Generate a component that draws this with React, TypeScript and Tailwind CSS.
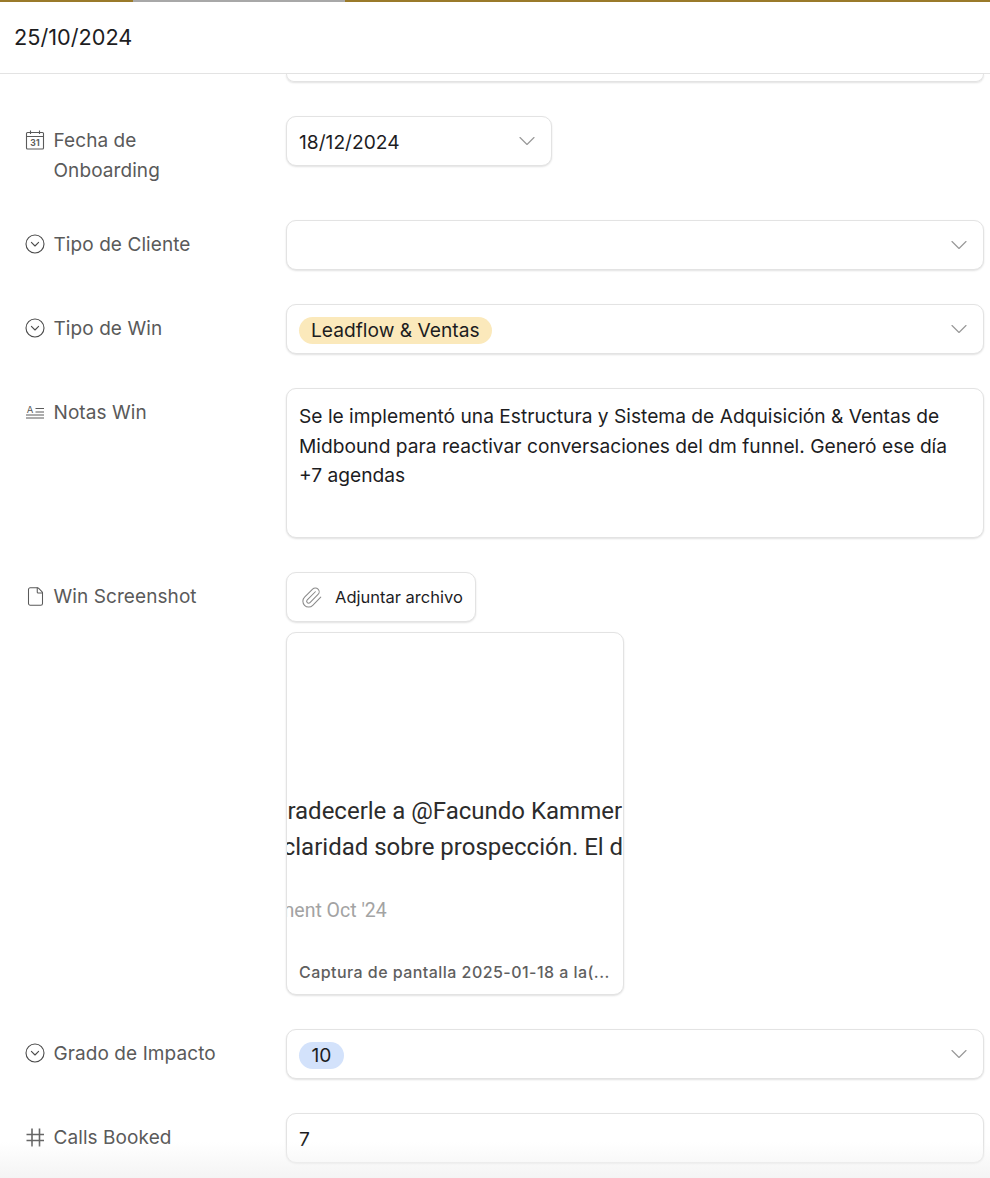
import React from "react";
import { Paperclip, File, ChevronDown } from "lucide-react";

const CircleDown = () => (
  <svg width="20" height="20" viewBox="0 0 20 20" fill="none" stroke="#4b4b4b" strokeWidth="1.1" strokeLinecap="round" strokeLinejoin="round">
    <circle cx="10" cy="10" r="9" />
    <path d="M6.4 8.4 10 12l3.6-3.6" />
  </svg>
);

const CalendarIcon = () => (
  <svg width="20" height="20" viewBox="0 0 20 20" fill="none" stroke="#5a5a5a" strokeWidth="1.1">
    <rect x="1.5" y="2.5" width="17" height="16.5" rx="1" />
    <path d="M1.5 6.5h17M5.5 0.5v3.5M14.5 0.5v3.5" />
    <text x="10" y="16" textAnchor="middle" fontSize="8.5" fontWeight="700" fill="#5a5a5a" stroke="none" fontFamily="Inter, sans-serif">31</text>
  </svg>
);

const NotesIcon = () => (
  <svg width="20" height="20" viewBox="0 0 20 20" fill="none" stroke="#5a5a5a" strokeWidth="1">
    <text x="5" y="10.5" textAnchor="middle" fontSize="9.5" fill="#5a5a5a" stroke="none" fontFamily="Inter, sans-serif">A</text>
    <path d="M10.5 6.5h8.5M10.5 10h8.5M1 13h18M1 16h18" />
  </svg>
);

const HashIcon = () => (
  <svg width="20" height="20" viewBox="0 0 20 20" fill="none" stroke="#666" strokeWidth="1.6">
    <path d="M7 1.5v18M14.5 1.5v18M1.5 7.5h17.5M1.5 13.5h17.5" />
  </svg>
);

const Label = ({ icon, children }: { icon: React.ReactNode; children: React.ReactNode }) => (
  <div className="flex w-[261px] shrink-0 pl-[25px] pt-[10px] pr-[27px] text-[19px] leading-[30px] tracking-[0.08px] text-[#5a5a5a]">
    <span className="mt-[4px] w-[28.5px] shrink-0">{icon}</span>
    <span>{children}</span>
  </div>
);

const box = "rounded-[10px] border border-[#e3e3e3] bg-white shadow-[0_1px_2px_rgba(0,0,0,0.12)]";

const Select = ({ children, w }: { children?: React.ReactNode; w?: string }) => (
  <div className={`${box} flex h-[50px] items-center justify-between pl-[12px] pr-[10px] ${w ?? "w-[698px]"}`}>
    <div className="flex items-center pt-[2px]">{children}</div>
    <ChevronDown size={28} strokeWidth={1} color="#999" />
  </div>
);

export default function App() {
  return (
    <div className="relative h-[1178px] w-[990px] overflow-hidden bg-white text-[#1d1d1f] [font-family:Inter,'Liberation_Sans',sans-serif]">
      <div className="flex h-[2px]">
        <div className="w-[133px] bg-[#9a7a2a]" />
        <div className="w-[212px] bg-[#a8a8a8]" />
        <div className="flex-1 bg-[#9a7a2a]" />
      </div>
      <div className="flex h-[72px] items-center border-b border-[#e3e3e3] pl-[14px] text-[21.7px] text-[#1d1d1f]">25/10/2024</div>

      <div className="pl-[286px]">
        <div className="h-[8px] w-[698px] rounded-b-[10px] border-x border-b border-[#e3e3e3] shadow-[0_1px_2px_rgba(0,0,0,0.12)]" />
      </div>

      <div className="mt-[34px] flex flex-col gap-[34px]">
        <div className="flex h-[70px] items-start">
          <div className="w-[286px] shrink-0"><Label icon={<CalendarIcon />}>Fecha de Onboarding</Label></div>
          <Select w="w-[266px]"><span className="mt-[1px] text-[19.2px]">18/12/2024</span></Select>
        </div>

        <div className="flex">
          <div className="w-[286px] shrink-0"><Label icon={<CircleDown />}>Tipo de Cliente</Label></div>
          <Select />
        </div>

        <div className="flex">
          <div className="w-[286px] shrink-0"><Label icon={<CircleDown />}>Tipo de Win</Label></div>
          <Select>
            <span className="rounded-full bg-[#fbe9bb] px-[12px] text-[19.2px] leading-[27px]">Leadflow &amp; Ventas</span>
          </Select>
        </div>

        <div className="flex">
          <div className="w-[286px] shrink-0"><Label icon={<NotesIcon />}>Notas Win</Label></div>
          <div className={`${box} h-[150px] w-[698px] px-[12px] pt-[13px] text-[19.2px] leading-[29.7px]`}>
            Se le implementó una Estructura y Sistema de Adquisición &amp; Ventas de Midbound para reactivar conversaciones del dm funnel. Generó ese día +7 agendas
          </div>
        </div>

        <div className="flex">
          <div className="w-[286px] shrink-0"><Label icon={<File size={21} strokeWidth={1.2} color="#5a5a5a" />}>Win Screenshot</Label></div>
          <div className="flex flex-col items-start gap-[10px]">
            <div className={`${box} flex h-[50px] w-[190px] items-center pl-[13px] text-[16.5px] text-[#1d1d1f]`}>
              <Paperclip size={23} strokeWidth={1.1} color="#8a8a8a" className="mr-[12px]" />
              <span>Adjuntar archivo</span>
            </div>
            <div className={`${box} flex h-[363px] w-[338px] flex-col overflow-hidden`}>
              <div className="h-[327px] shrink-0 overflow-hidden whitespace-nowrap pt-[160px] [font-family:Roboto,sans-serif]">
                <div className="ml-[-102px] text-[24px] leading-[36px] text-[#2c2c2c]">Quiero agradecerle a @Facundo Kammer por</div>
                <div className="ml-[-36.5px] text-[24px] leading-[36px] text-[#2c2c2c]">de claridad sobre prospección. El día de hoy</div>
                <div className="ml-[-34px] mt-[32px] text-[19.5px] leading-[28px] text-[#a3a3a3]">Onment Oct '24</div>
              </div>
              <div className="truncate px-[12px] text-[16px] font-medium tracking-[0.45px] text-[#5f5f5f]">Captura de pantalla 2025-01-18 a la(...</div>
            </div>
          </div>
        </div>

        <div className="flex">
          <div className="w-[286px] shrink-0"><Label icon={<CircleDown />}>Grado de Impacto</Label></div>
          <Select>
            <span className="rounded-full bg-[#d3e2fb] px-[12.5px] text-[19.2px] leading-[27px]">10</span>
          </Select>
        </div>

        <div className="flex">
          <div className="w-[286px] shrink-0"><Label icon={<HashIcon />}>Calls Booked</Label></div>
          <div className={`${box} flex h-[50px] w-[698px] items-center pl-[12px] pt-[2px] text-[19.2px]`}>7</div>
        </div>
      </div>

      <div className="pointer-events-none absolute inset-x-0 bottom-0 h-[36px] bg-gradient-to-b from-transparent to-[#f4f4f4]" />
    </div>
  );
}
